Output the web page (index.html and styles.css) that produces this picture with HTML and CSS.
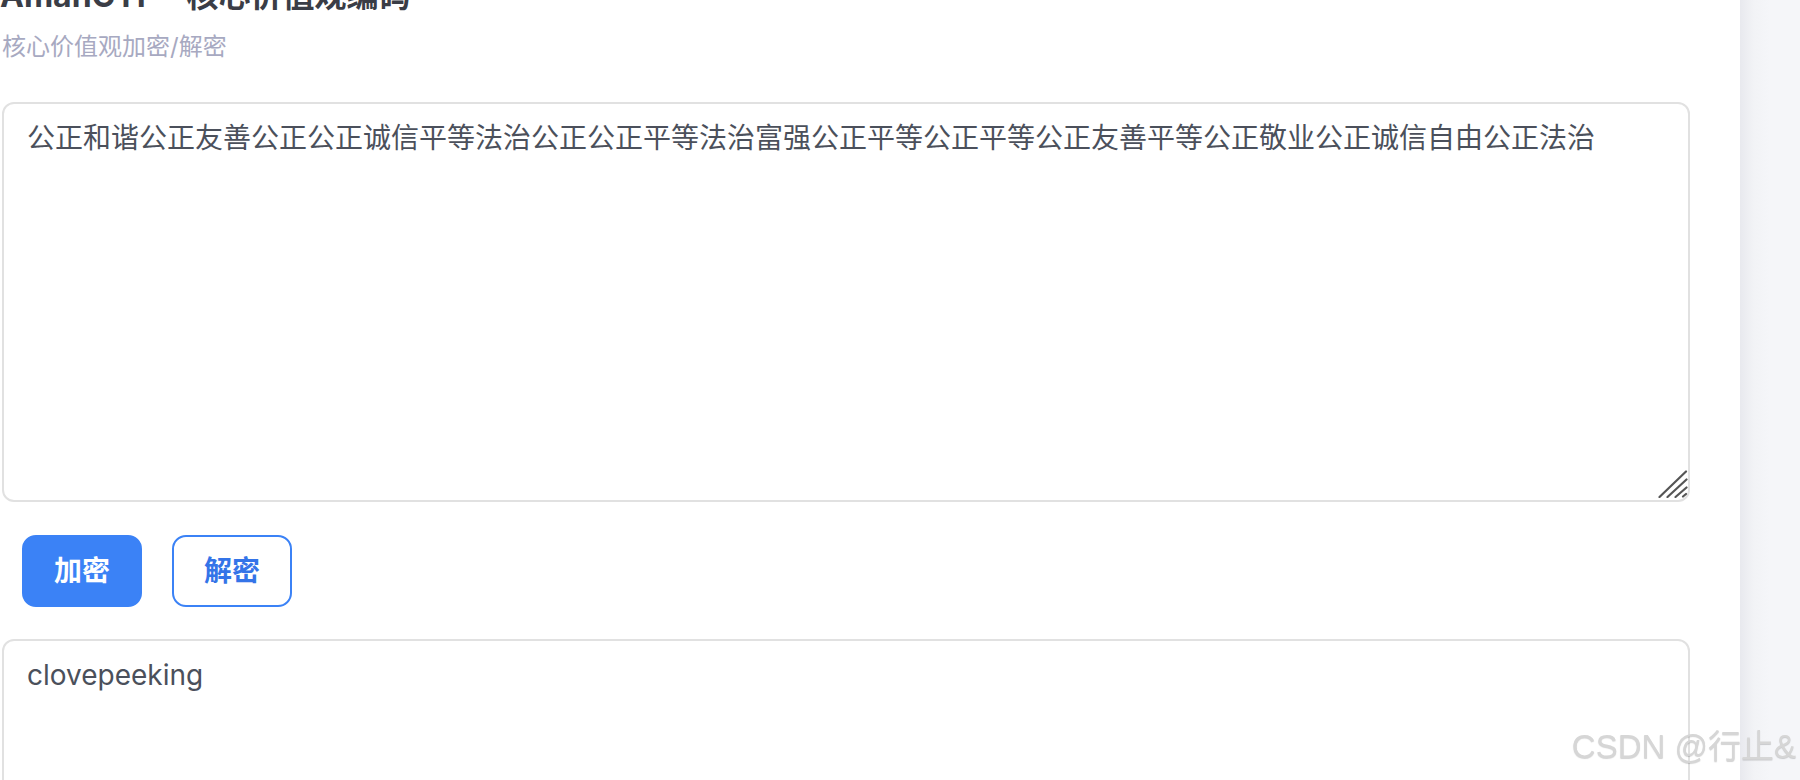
FILE: index.html
```html
<!DOCTYPE html>
<html lang="zh-CN">
<head>
<meta charset="utf-8">
<title>AmanCTF - 核心价值观编码</title>
<link rel="stylesheet" href="styles.css">
</head>
<body>
<div class="layout">
  <main class="main">
    <h1 class="title">AmanCTF – 核心价值观编码</h1>
    <p class="subtitle">核心价值观加密/解密</p>
    <div class="field field-input">
      <textarea class="box">公正和谐公正友善公正公正诚信平等法治公正公正平等法治富强公正平等公正平等公正友善平等公正敬业公正诚信自由公正法治</textarea>
      <svg class="grip" width="30" height="28" viewBox="0 0 30 28" aria-hidden="true">
        <path d="M1.5 27L28 1.5M9.5 27L28.5 9.5M17.5 27L28.5 17.5M25 26.5L28 24" stroke="#555555" stroke-width="2.2" stroke-linecap="round" fill="none"/>
      </svg>
    </div>
    <div class="actions">
      <button class="btn btn-primary" type="button">加密</button>
      <button class="btn btn-outline" type="button">解密</button>
    </div>
    <div class="field">
      <textarea class="box">clovepeeking</textarea>
    </div>
  </main>
  <aside class="sidebar"></aside>
</div>
<div class="watermark">CSDN @行止&amp;</div>
</body>
</html>
```

FILE: styles.css
```css
* { box-sizing: border-box; }
html, body {
  margin: 0;
  padding: 0;
  height: 100%;
  overflow: hidden;
  background: #ffffff;
  font-family: "Inter", "Noto Sans CJK SC", sans-serif;
}
.layout {
  display: flex;
  height: 780px;
}
.main {
  flex: 1;
  padding: 0 50px 0 2px;
  display: flex;
  flex-direction: column;
}
.sidebar {
  width: 60px;
  flex: none;
  background: linear-gradient(to right, #e8e9ee 0px, #f2f3f6 14px, #f5f6f9 30px, #f5f6f9 100%);
}
.title {
  margin: -24px 0 0 -2px;
  font-size: 32px;
  line-height: 40px;
  font-weight: 700;
  color: #3a3d46;
  white-space: nowrap;
}
.subtitle {
  margin: 15px 0 0 0;
  font-size: 24px;
  line-height: 32px;
  color: #a7a9c1;
}
.field {
  position: relative;
  flex: none;
}
.field-input { margin-top: 39px; }
.box {
  display: block;
  width: 100%;
  height: 400px;
  border: 2px solid #e1e1e1;
  border-radius: 12px;
  padding: 13px 23px 12px;
  font-family: "Inter", "Noto Sans CJK SC", sans-serif;
  font-size: 28px;
  line-height: 42px;
  color: #4b505b;
  background: #ffffff;
  resize: none;
  outline: none;
}
.grip {
  position: absolute;
  right: 2px;
  bottom: 4px;
  pointer-events: none;
}
.actions {
  display: flex;
  gap: 30px;
  padding: 33px 0 32px 20px;
}
.btn {
  width: 120px;
  height: 72px;
  border: 2px solid #3b82f6;
  border-radius: 14px;
  padding: 0;
  font-family: "Inter", "Noto Sans CJK SC", sans-serif;
  font-size: 28px;
  font-weight: 700;
  line-height: 40px;
  cursor: pointer;
}
.btn-primary {
  background: #3b82f6;
  color: #ffffff;
}
.btn-outline {
  background: #ffffff;
  color: #3474e8;
}
.watermark {
  position: fixed;
  right: 4px;
  bottom: 17px;
  font-family: "Liberation Sans", "Noto Sans CJK SC", sans-serif;
  font-size: 33px;
  line-height: 33px;
  color: #d6d6d6;
  text-shadow: 0 1px 1px rgba(0, 0, 0, 0.18);
  pointer-events: none;
  white-space: nowrap;
}
```
